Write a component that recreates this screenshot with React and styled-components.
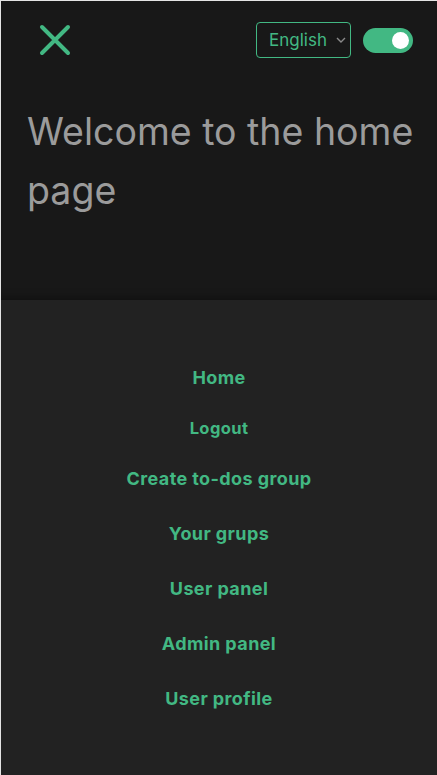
import React, { useState } from 'react';
import styled, { createGlobalStyle } from 'styled-components';

const GlobalStyle = createGlobalStyle`
  html, body {
    margin: 0;
    padding: 0;
    background: #222222;
  }
  body {
    border-top: 1px solid #e4e4e4;
    border-left: 1px solid #e4e4e4;
    font-family: Inter, "Noto Sans", sans-serif;
  }
  * { box-sizing: border-box; }
`;

const Page = styled.div`
  display: flex;
  flex-direction: column;
  min-height: 774px;
`;

const Header = styled.header`
  height: 299px;
  background: #181818;
  box-shadow: inset 0 -10px 10px -8px rgba(0, 0, 0, 0.35);
  padding: 21px 24px 0 26px;
`;

const TopBar = styled.div`
  display: flex;
  align-items: center;
  justify-content: space-between;
  height: 36px;
`;

const CloseButton = styled.button`
  background: none;
  border: none;
  padding: 0;
  margin-left: 12px;
  width: 32px;
  height: 32px;
  display: flex;
  align-items: center;
  justify-content: center;
  cursor: pointer;
`;

const Controls = styled.div`
  display: flex;
  align-items: center;
  gap: 12px;
`;

const SelectWrap = styled.div`
  position: relative;
  display: flex;
`;

const LangSelect = styled.select`
  appearance: none;
  -webkit-appearance: none;
  background: #181818;
  color: #42b883;
  border: 1px solid #42b883;
  border-radius: 4px;
  font-family: Inter, "Noto Sans", sans-serif;
  font-size: 17px;
  height: 36px;
  width: 95px;
  padding: 0 22px 0 12px;
  outline: none;
`;

const Chevron = styled.svg`
  position: absolute;
  right: 5px;
  top: 15px;
  pointer-events: none;
`;

const Toggle = styled.button`
  width: 50px;
  height: 25px;
  border-radius: 13px;
  border: none;
  background: ${p => (p.on ? '#42b883' : '#555')};
  position: relative;
  padding: 0;
  cursor: pointer;
`;

const Knob = styled.span`
  position: absolute;
  top: 4px;
  left: ${p => (p.on ? '29px' : '4px')};
  width: 17px;
  height: 17px;
  border-radius: 50%;
  background: #ffffff;
`;

const Title = styled.h1`
  margin: 44px -14px 0 0;
  font-weight: 400;
  font-size: 37.5px;
  line-height: 59px;
  color: #9b9b9b;
`;

const Nav = styled.nav`
  flex: 1;
  background: #222222;
  display: flex;
  flex-direction: column;
  align-items: center;
  padding-top: 50px;
`;

const NavLink = styled.a`
  display: block;
  height: ${p => (p.small ? '46px' : '55px')};
  line-height: ${p => (p.small ? '46px' : '55px')};
  font-size: ${p => (p.small ? '16.5px' : '18px')};
  letter-spacing: 0.4px;
  font-weight: 700;
  color: #42b883;
  text-decoration: none;
  cursor: pointer;
`;

const links = [
  { label: 'Home' },
  { label: 'Logout', small: true },
  { label: 'Create to-dos group' },
  { label: 'Your grups' },
  { label: 'User panel' },
  { label: 'Admin panel' },
  { label: 'User profile' },
];

const App = () => {
  const [dark, setDark] = useState(true);

  return (
    <Page>
      <GlobalStyle />
      <Header>
        <TopBar>
          <CloseButton aria-label="close menu">
            <svg width="32" height="32" viewBox="0 0 32 32">
              <path
                d="M3 3 L29 29 M29 3 L3 29"
                stroke="#42b883"
                strokeWidth="4"
                strokeLinecap="round"
                fill="none"
              />
            </svg>
          </CloseButton>
          <Controls>
            <SelectWrap>
              <LangSelect defaultValue="en">
                <option value="en">English</option>
                <option value="pl">Polski</option>
              </LangSelect>
              <Chevron width="10" height="6" viewBox="0 0 10 6">
                <path d="M1 1 L5 5 L9 1" stroke="#8a8a8a" strokeWidth="1.4" fill="none" />
              </Chevron>
            </SelectWrap>
            <Toggle on={dark ? 1 : 0} onClick={() => setDark(!dark)}>
              <Knob on={dark ? 1 : 0} />
            </Toggle>
          </Controls>
        </TopBar>
        <Title>Welcome to the home page</Title>
      </Header>
      <Nav>
        {links.map(l => (
          <NavLink key={l.label} small={l.small}>
            {l.label}
          </NavLink>
        ))}
      </Nav>
    </Page>
  );
};

export default App;
